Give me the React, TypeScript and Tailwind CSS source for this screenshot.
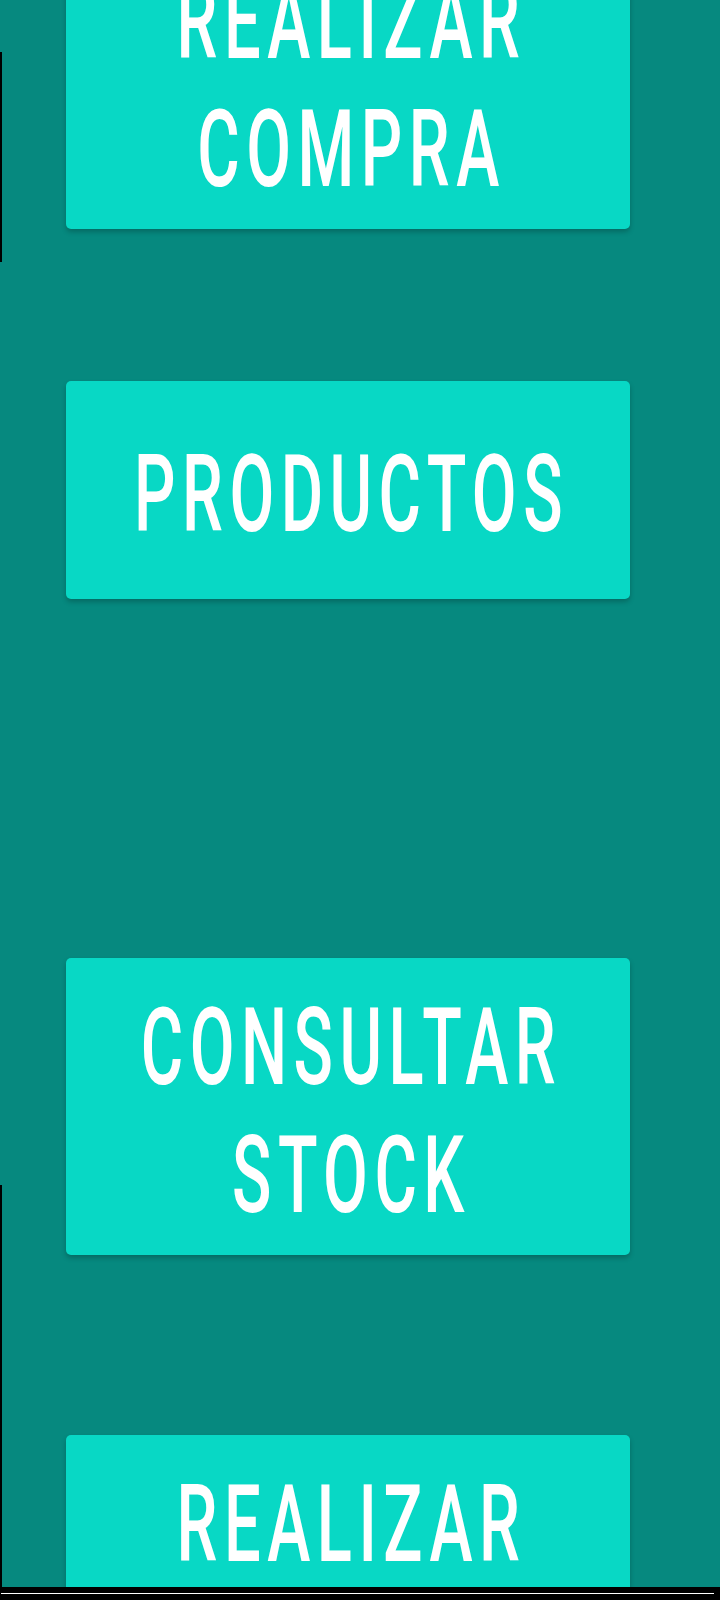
import type { ReactNode } from 'react';

function MenuButton({ className, children }: { className: string; children: ReactNode }) {
  return (
    <button
      className={`ml-[66px] flex w-[564px] shrink-0 items-center justify-center rounded-[5px] bg-[#08d8c5] shadow-[0_3px_5px_rgba(0,0,0,0.22)] ${className}`}
    >
      {/* pl offsets the trailing letter-spacing so the text sits centred */}
      <span className="block translate-y-[5px] scale-y-[1.66] pl-[7px] font-['Roboto',sans-serif] text-[65px] font-medium uppercase leading-[77px] tracking-[0.1em] text-white">
        {children}
      </span>
    </button>
  );
}

export default function App() {
  return (
    <div className="relative flex h-[1600px] w-[720px] flex-col overflow-hidden bg-black">
      <div className="flex h-[1587px] shrink-0 flex-col overflow-hidden bg-[#06897f]">
        <MenuButton className="mt-[-68px] h-[297px]">
          Realizar
          <br />
          Compra
        </MenuButton>
        <MenuButton className="mt-[152px] h-[218px]">Productos</MenuButton>
        <MenuButton className="mt-[359px] h-[297px]">
          Consultar
          <br />
          Stock
        </MenuButton>
        <MenuButton className="mt-[180px] h-[297px]">
          Realizar
          <br />
          Venta
        </MenuButton>
      </div>
      <div className="mt-[6px] ml-px h-px w-[713px] bg-white" />

      {/* edge artifacts */}
      <div className="absolute left-0 top-[52px] h-[210px] w-[2px] bg-black" />
      <div className="absolute left-0 top-[1185px] h-[402px] w-[2px] bg-black" />
    </div>
  );
}
